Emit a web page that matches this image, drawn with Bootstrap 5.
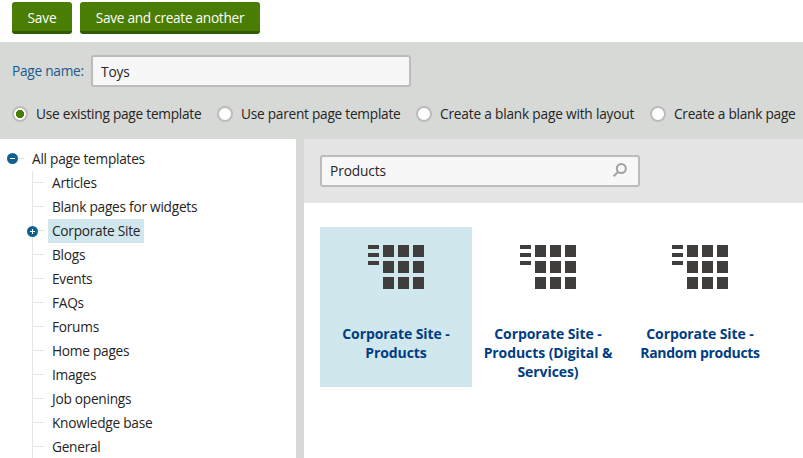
<!DOCTYPE html>
<html lang="en">
<head>
<meta charset="utf-8">
<meta name="viewport" content="width=device-width, initial-scale=1">
<title>New page</title>
<link rel="stylesheet" href="https://cdn.jsdelivr.net/npm/bootstrap@5.3.0/dist/css/bootstrap.min.css">
<style>
body{font:13.7px/24px "Segoe UI","Open Sans","Noto Sans",sans-serif;letter-spacing:-.26px;color:#262524;background:#fff;height:458px}
.actions{height:42px;padding:2px 12px 0}
.btn-save{--bs-btn-color:#fff;--bs-btn-bg:#497d04;--bs-btn-hover-color:#fff;--bs-btn-hover-bg:#3f6d03;height:32px;padding:1px 0 0;border:0;border-bottom:3px solid #315b00;border-radius:3px;font-size:13.7px;line-height:29px;letter-spacing:inherit}
.w-save{width:60px}.w-another{width:180px;letter-spacing:-.31px}
.w-save{letter-spacing:-.1px}
.options{height:97px;background:#d6d9d6;padding:13px 0 0 12px}
.options .name-label{width:79px;color:#1b5a8e}
.field{width:320px;height:32px;padding:0 8px;border:2px solid #bdbbbb;border-radius:3px;background:#f7f7f7;color:#262524;font-size:13.7px;letter-spacing:-.1px;line-height:28px}
.choices{margin-top:15px;height:24px}
.choice{display:flex;align-items:center;white-space:nowrap;flex:none}
.choice:nth-child(1){width:205px}.choice:nth-child(2){width:199px}.choice:nth-child(3){width:234px;letter-spacing:-.2px}
.choice .form-check-input{width:16px;height:16px;margin:0 8px 1px 0;border:2px solid #bdbbbb;background:#fff;flex:none}
.choice .form-check-input:checked{background:radial-gradient(circle,#497d04 0 3.9px,#fff 4.4px)}
.tree{width:296px;padding-top:8px}
.tree ul{margin-left:32px;border-left:1px solid #e5e5e5}
.tree-row{display:flex;height:24px;align-items:center}
.tree-row::before{content:"";width:11px;height:1px;background:#e5e5e5;margin:-1px 4px 0 0}
.tree-row span{padding:0 4px}
.tree-row.root{margin-left:13px}
.tree-row svg{margin:1px -5px 0 -6px;order:-1;position:relative;z-index:1}
.tree-row.root svg{margin-top:0;margin-bottom:1px}
.chosen{background:#d0e7ed;height:24px}
.divider{width:8px;background:#d6d9d6}
.filter{height:64px;background:#e5e5e5;padding:16px}
.filter svg{margin:0 2px 2px 0}
.tile{width:152px;height:160px;padding:18px 10px 0;color:#003d82;font-size:14px;font-weight:700;line-height:19px;text-align:center;letter-spacing:-.08px}
.tile svg{margin-bottom:35px}
.tile .tight{letter-spacing:-.3px}
.tile-active{background:#d0e7ed}
.tiles{padding:24px 16px}
</style>
</head>
<body class="d-flex flex-column overflow-hidden">
<svg class="d-none"><symbol id="grid" viewBox="0 0 56 44"><path fill="#403e3d" d="M0 0h11v4H0zM0 8h11v4H0zM0 16h11v4H0zM15 0h11v12H15zM30 0h11v12H30zM45 0h11v12H45zM15 16h11v12H15zM30 16h11v12H30zM45 16h11v12H45zM15 32h11v12H15zM30 32h11v12H30zM45 32h11v12H45z"/></symbol></svg>
<header class="actions d-flex gap-2 flex-shrink-0">
  <button class="btn btn-save w-save">Save</button>
  <button class="btn btn-save w-another">Save and create another</button>
</header>
<form class="options flex-shrink-0">
  <div class="d-flex align-items-center">
    <label class="name-label" for="pagename">Page name:</label>
    <input class="form-control field" id="pagename" value="Toys">
  </div>
  <div class="choices d-flex">
    <label class="choice"><input class="form-check-input" type="radio" name="mode" checked><span>Use existing page template</span></label>
    <label class="choice"><input class="form-check-input" type="radio" name="mode"><span>Use parent page template</span></label>
    <label class="choice"><input class="form-check-input" type="radio" name="mode"><span>Create a blank page with layout</span></label>
    <label class="choice"><input class="form-check-input" type="radio" name="mode"><span>Create a blank page</span></label>
  </div>
</form>
<main class="d-flex flex-grow-1 overflow-hidden">
  <nav class="tree flex-shrink-0">
    <div class="tree-row root"><svg width="11" height="11" viewBox="0 0 11 11"><circle cx="5.5" cy="5.5" r="5.5" fill="#0f6194"/><path d="M3 5.5h5" stroke="#fff"/></svg><span>All page templates</span></div>
    <ul class="list-unstyled mb-0">
      <li class="tree-row"><span>Articles</span></li>
      <li class="tree-row"><span>Blank pages for widgets</span></li>
      <li class="tree-row"><svg width="11" height="11" viewBox="0 0 11 11"><circle cx="5.5" cy="5.5" r="5.5" fill="#0f6194"/><path d="M3 5.5h5M5.5 3v5" stroke="#fff"/></svg><span class="chosen">Corporate Site</span></li>
      <li class="tree-row"><span>Blogs</span></li>
      <li class="tree-row"><span>Events</span></li>
      <li class="tree-row"><span>FAQs</span></li>
      <li class="tree-row"><span>Forums</span></li>
      <li class="tree-row"><span>Home pages</span></li>
      <li class="tree-row"><span>Images</span></li>
      <li class="tree-row"><span>Job openings</span></li>
      <li class="tree-row"><span>Knowledge base</span></li>
      <li class="tree-row"><span>General</span></li>
    </ul>
  </nav>
  <div class="divider flex-shrink-0"></div>
  <section class="flex-grow-1">
    <div class="filter">
      <div class="field d-flex align-items-center justify-content-between">
        <span>Products</span>
        <svg width="16" height="16" viewBox="0 0 16 16" fill="none" stroke="#a3a2a2" stroke-width="2"><circle cx="9.3" cy="6.5" r="4.5"/><path d="M6.2 9.7 1.6 14.2"/></svg>
      </div>
    </div>
    <div class="tiles d-flex">
      <div class="tile tile-active"><svg width="56" height="44"><use href="#grid"/></svg><div>Corporate Site -<br>Products</div></div>
      <div class="tile"><svg width="56" height="44"><use href="#grid"/></svg><div>Corporate Site -<br>Products (Digital &amp;<br>Services)</div></div>
      <div class="tile"><svg width="56" height="44"><use href="#grid"/></svg><div>Corporate Site -<br><span class="tight">Random products</span></div></div>
    </div>
  </section>
</main>
<script src="https://cdn.jsdelivr.net/npm/bootstrap@5.3.0/dist/js/bootstrap.bundle.min.js"></script>
</body>
</html>
